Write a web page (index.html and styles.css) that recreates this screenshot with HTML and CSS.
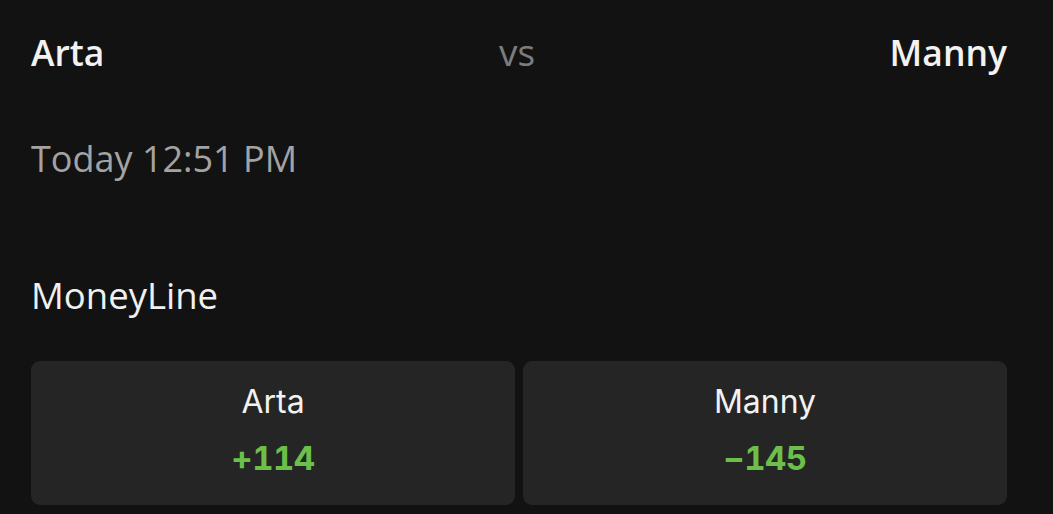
FILE: index.html
```html
<!DOCTYPE html>
<html>
<head>
<meta charset="utf-8">
<link rel="stylesheet" href="styles.css">
</head>
<body>
<div class="page">
  <div class="matchup">
    <span class="team">Arta</span>
    <span class="vs">vs</span>
    <span class="team">Manny</span>
  </div>
  <div class="time">Today 12:51 PM</div>
  <div class="market">MoneyLine</div>
  <div class="odds">
    <div class="odd">
      <div class="odd-name">Arta</div>
      <div class="odd-price">+114</div>
    </div>
    <div class="odd">
      <div class="odd-name">Manny</div>
      <div class="odd-price">&minus;145</div>
    </div>
  </div>
</div>
</body>
</html>
```
FILE: styles.css
```css
html, body {
  margin: 0;
  padding: 0;
  background: #121212;
}
.page {
  width: 1053px;
  height: 514px;
  box-sizing: border-box;
  padding: 22px 46px 0 31px;
  font-family: "Open Sans", sans-serif;
  color: #f2f2f2;
  overflow: hidden;
}
.matchup {
  display: flex;
  justify-content: space-between;
  align-items: baseline;
  height: 60px;
}
.team {
  font-size: 35.5px;
  font-weight: 600;
  line-height: 60px;
}
.vs {
  font-size: 37px;
  color: #7c7c7c;
  line-height: 60px;
  margin-left: 40px;
}
.time {
  margin-top: 52px;
  font-size: 36px;
  line-height: 50px;
  color: #a3a3a3;
}
.market {
  margin-top: 86px;
  font-size: 36.5px;
  line-height: 50px;
  color: #f0f0f0;
}
.odds {
  margin-top: 41px;
  display: grid;
  grid-template-columns: 1fr 1fr;
  gap: 8px;
}
.odd {
  background: #252525;
  border-radius: 9px;
  height: 144px;
  display: flex;
  flex-direction: column;
  align-items: center;
  font-family: Inter, "Open Sans", sans-serif;
}
.odd-name {
  margin-top: 21px;
  font-size: 32px;
  line-height: 40px;
  color: #f2f2f2;
}
.odd-price {
  margin-top: 14px;
  font-size: 33px;
  font-weight: 700;
  line-height: 44px;
  font-feature-settings: "tnum";
  letter-spacing: -0.5px;
  color: #6cc04a;
}
```
